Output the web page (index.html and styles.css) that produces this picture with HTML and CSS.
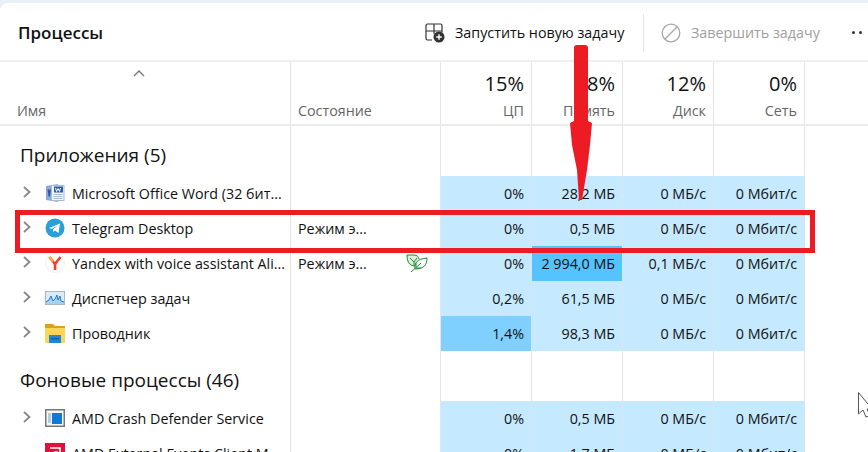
FILE: index.html
```html
<!DOCTYPE html>
<html lang="en">
<head>
    <meta charset="UTF-8">
    <meta name="viewport" content="width=device-width, initial-scale=1.0">
    <title>Процессы</title>
    <link rel="stylesheet" href="styles.css">
</head>
<body>
    <div class="panel">
        <!-- Toolbar -->
        <div class="toolbar">
            <div class="title">Процессы</div>
            <div class="action action-run">
                <svg width="20" height="20" viewBox="0 0 20 20" fill="none" stroke="#333" stroke-width="1.2">
                    <path d="M1 8V2.500A1.500 1.500 0 0 1 2.500 1H15.500A1.500 1.500 0 0 1 17 2.500V9.500M1 8H17M9 1V11M1 8V15.500A1.500 1.500 0 0 0 2.500 17H7"/>
                    <circle cx="14" cy="14" r="5.500" fill="#333" stroke="none"/>
                    <path d="M14 11.200V16.800M11.200 14H16.800" stroke="#fff" stroke-width="1.400"/>
                </svg>
                <span>Запустить новую задачу</span>
            </div>
            <div class="divider"></div>
            <div class="action action-off">
                <svg width="20" height="20" viewBox="0 0 20 20" fill="none" stroke="#a8a8a8" stroke-width="1.300">
                    <circle cx="10" cy="10" r="8.800"/>
                    <path d="M3.800 16.200L16.200 3.800"/>
                </svg>
                <span>Завершить задачу</span>
            </div>
            <div class="more"><i></i><i></i></div>
        </div>

        <!-- Column headers -->
        <div class="row head">
            <div class="cell name-head">
                <svg class="sort" width="12" height="7" viewBox="0 0 12 7" fill="none" stroke="#777" stroke-width="1.300"><path d="M1 6L6 1L11 6"/></svg>
                <span class="label">Имя</span>
            </div>
            <div class="cell state-head"><span class="label">Состояние</span></div>
            <div class="cell num-head"><span class="pct">15%</span><span class="label">ЦП</span></div>
            <div class="cell num-head"><span class="pct">18%</span><span class="label">Память</span></div>
            <div class="cell num-head"><span class="pct">12%</span><span class="label">Диск</span></div>
            <div class="cell num-head"><span class="pct">0%</span><span class="label">Сеть</span></div>
        </div>

        <!-- Apps -->
        <div class="row group">
            <div class="cell group-name">Приложения (5)</div>
            <div class="cell"></div><div class="cell"></div><div class="cell"></div><div class="cell"></div><div class="cell"></div>
        </div>

        <div class="row item">
            <div class="cell name">
                <svg class="arrow" width="8" height="12" viewBox="0 0 8 12" fill="none" stroke="#888" stroke-width="1.800"><path d="M1 1L6.500 6L1 11"/></svg>
                <svg class="icon" width="20" height="20" viewBox="0 0 20 20">
                    <path d="M1 3L13 1V19L1 17Z" fill="#8fa9d6"/>
                    <rect x="6.500" y="2.500" width="12.500" height="15" fill="#f4f6fa" stroke="#a9bad6"/>
                    <rect x="9" y="3.500" width="9" height="6" fill="#2b5aa8"/>
                    <path d="M10.500 5L11.500 8.500L13 5.500L14.500 8.500L15.500 5" fill="none" stroke="#fff"/>
                    <path d="M8.500 11.500H17.500M8.500 13.500H17.500M8.500 15.500H17.500" stroke="#a9bad6"/>
                    <path d="M2.500 6.500H6L5 13.500H3.500Z" fill="#2f5ea8"/>
                </svg>
                <span class="text">Microsoft Office Word (32 бит...</span>
            </div>
            <div class="cell state"></div>
            <div class="cell val load">0%</div>
            <div class="cell val load">28,2 МБ</div>
            <div class="cell val load">0 МБ/с</div>
            <div class="cell val load">0 Мбит/с</div>
        </div>

        <div class="row item">
            <div class="cell name">
                <svg class="arrow" width="8" height="12" viewBox="0 0 8 12" fill="none" stroke="#888" stroke-width="1.800"><path d="M1 1L6.500 6L1 11"/></svg>
                <svg class="icon" width="20" height="20" viewBox="0 0 20 20">
                    <circle cx="10" cy="10" r="9.500" fill="#2a9fd8"/>
                    <path d="M4 10L15 5.500L13.500 15L10 12.500L8.500 14L8 11.500L12.500 7.500L6.800 11Z" fill="#fff"/>
                </svg>
                <span class="text">Telegram Desktop</span>
            </div>
            <div class="cell state"><span class="text">Режим э...</span></div>
            <div class="cell val load">0%</div>
            <div class="cell val load">0,5 МБ</div>
            <div class="cell val load">0 МБ/с</div>
            <div class="cell val load">0 Мбит/с</div>
        </div>

        <div class="row item">
            <div class="cell name">
                <svg class="arrow" width="8" height="12" viewBox="0 0 8 12" fill="none" stroke="#888" stroke-width="1.800"><path d="M1 1L6.500 6L1 11"/></svg>
                <svg class="icon" width="20" height="20" viewBox="0 0 20 20">
                    <circle cx="10" cy="10" r="9.500" fill="#fff" stroke="#f2f2f2"/>
                    <path d="M4.500 4L10 11L15.500 4" fill="none" stroke="#f2402f" stroke-width="2.600"/>
                    <path d="M10 10V17" stroke="#f2402f" stroke-width="2.600"/>
                    <path d="M4.500 4L8 8.500" stroke="#f9b233" stroke-width="2.600"/>
                </svg>
                <span class="text">Yandex with voice assistant Ali...</span>
            </div>
            <div class="cell state">
                <span class="text">Режим э...</span>
                <svg class="leaf" width="22" height="19" viewBox="0 0 22 19" fill="none" stroke="#1f8a2e" stroke-width="1">
                    <path d="M9 12C3 12 1 7 1 1H8C11 1 13 3 13 5" fill="#dceedd"/>
                    <path d="M9 15C8 9 11 5 21 4C21 11 18 15 9 15Z" fill="#fff"/>
                    <path d="M5 18L15 9M10 13V9M10 14H15M4 4L8 8L11 4M8 8V12"/>
                </svg>
            </div>
            <div class="cell val load">0%</div>
            <div class="cell val load-high">2 994,0 МБ</div>
            <div class="cell val load">0,1 МБ/с</div>
            <div class="cell val load">0 Мбит/с</div>
        </div>

        <div class="row item">
            <div class="cell name">
                <svg class="arrow" width="8" height="12" viewBox="0 0 8 12" fill="none" stroke="#888" stroke-width="1.800"><path d="M1 1L6.500 6L1 11"/></svg>
                <svg class="icon" width="20" height="20" viewBox="0 0 20 20">
                    <rect x="0.500" y="3.500" width="19" height="13" fill="#dcebf7" stroke="#a9b8c6"/>
                    <path d="M1 14L4 12L6 8L8 13L10 11L12 7L13 12L15 8L16 13L19 14V16H1Z" fill="#a5d2f2"/>
                    <path d="M1 14L4 12L6 8L8 13L10 11L12 7L13 12L15 8L16 13L19 14" fill="none" stroke="#2377c9"/>
                </svg>
                <span class="text">Диспетчер задач</span>
            </div>
            <div class="cell state"></div>
            <div class="cell val load">0,2%</div>
            <div class="cell val load">61,5 МБ</div>
            <div class="cell val load">0 МБ/с</div>
            <div class="cell val load">0 Мбит/с</div>
        </div>

        <div class="row item">
            <div class="cell name">
                <svg class="arrow" width="8" height="12" viewBox="0 0 8 12" fill="none" stroke="#888" stroke-width="1.800"><path d="M1 1L6.500 6L1 11"/></svg>
                <svg class="icon" width="20" height="20" viewBox="0 0 20 20">
                    <path d="M0 1H8L10 3H20V6H0Z" fill="#d9a21b"/>
                    <rect x="0" y="5" width="20" height="15" fill="#fcd55b"/>
                    <rect x="4" y="12" width="12" height="8" fill="#1e88d8"/>
                    <rect x="6" y="15" width="8" height="1.500" fill="#0f5ea8"/>
                </svg>
                <span class="text">Проводник</span>
            </div>
            <div class="cell state"></div>
            <div class="cell val load-mid">1,4%</div>
            <div class="cell val load">98,3 МБ</div>
            <div class="cell val load">0 МБ/с</div>
            <div class="cell val load">0 Мбит/с</div>
        </div>

        <!-- Background processes -->
        <div class="row group">
            <div class="cell group-name">Фоновые процессы (46)</div>
            <div class="cell"></div><div class="cell"></div><div class="cell"></div><div class="cell"></div><div class="cell"></div>
        </div>

        <div class="row item">
            <div class="cell name">
                <svg class="arrow" width="8" height="12" viewBox="0 0 8 12" fill="none" stroke="#888" stroke-width="1.800"><path d="M1 1L6.500 6L1 11"/></svg>
                <svg class="icon" width="20" height="20" viewBox="0 0 20 20">
                    <rect x="0.750" y="1.750" width="18.500" height="16.500" fill="#f7f7f7" stroke="#777" stroke-width="1.500"/>
                    <rect x="7" y="5" width="10" height="11" fill="#0f7bd7"/>
                    <path d="M3 6H6M3 8H6M3 10H6M3 12H6M3 14H6" stroke="#6aa7dc"/>
                </svg>
                <span class="text">AMD Crash Defender Service</span>
            </div>
            <div class="cell state"></div>
            <div class="cell val load">0%</div>
            <div class="cell val load">0,5 МБ</div>
            <div class="cell val load">0 МБ/с</div>
            <div class="cell val load">0 Мбит/с</div>
        </div>

        <div class="row item">
            <div class="cell name">
                <svg class="icon icon-last" width="20" height="20" viewBox="0 0 20 20">
                    <rect width="20" height="20" fill="#e0103a"/>
                    <path d="M5 5H15V15M9 9H12V12" fill="none" stroke="#fff" stroke-width="1.600"/>
                </svg>
                <span class="text">AMD External Events Client M</span>
            </div>
            <div class="cell state"></div>
            <div class="cell val load">0%</div>
            <div class="cell val load">1,7 МБ</div>
            <div class="cell val load">0 МБ/с</div>
            <div class="cell val load">0 Мбит/с</div>
        </div>
    </div>

    <!-- Annotations drawn over the screenshot -->
    <div class="mark-box"></div>
    <svg class="mark-arrow" width="24" height="158" viewBox="0 0 24 158">
        <path d="M4 3Q4 0 7 0H15Q18 0 18 3V76L22 78L20 100L17 125L12 155L9 155L7 125L2 100L0 78L4 76Z" fill="#ed1c24"/>
    </svg>
    <svg class="cursor" width="12" height="26" viewBox="0 0 12 26" fill="#fff" stroke="#555" stroke-width="1"><path d="M0.500 0.500V22L5 18L8 25L12 23.500L9 17H14Z"/></svg>
</body>
</html>
```

FILE: styles.css
```css
html, body {
    margin: 0;
    height: 100%;
    overflow: hidden;
}
body {
    background-color: #e9eff7;
    color: #111;
    font-family: "Open Sans", "Noto Sans", sans-serif;
    font-size: 14.3px;
    padding-top: 3px;
    box-sizing: border-box;
}
.panel {
    background-color: #fff;
    border-top-left-radius: 8px;
    height: 100%;
}
.toolbar {
    display: flex;
    align-items: center;
    height: 59px;
    box-sizing: border-box;
    padding: 2px 0 0 18px;
    border-bottom: 2px solid #f0f0f0;
}
.title {
    font-size: 17px;
    font-weight: 600;
    margin-right: auto;
}
.action {
    display: flex;
    align-items: center;
    gap: 10px;
    white-space: nowrap;
}
.action-run {
    width: 218px;
}
.action-off {
    color: #a0a0a0;
    width: 174px;
    margin-left: 17px;
}
.divider {
    width: 1px;
    height: 38px;
    background-color: #e6e6e6;
}
.more {
    display: flex;
    gap: 4px;
    width: 16px;
    margin-left: 17px;
}
.more i {
    width: 3px;
    height: 3px;
    border-radius: 50%;
    background-color: #333;
}
.row {
    display: grid;
    grid-template-columns: 291px 150px 91px 91px 91px 91px;
}
.cell {
    box-sizing: border-box;
    border-right: 1px solid #e5e5e5;
    min-width: 0;
}
.head {
    height: 64px;
    border-bottom: 2px solid #ececec;
    box-sizing: border-box;
}
.name-head, .state-head {
    display: flex;
    flex-direction: column;
    justify-content: flex-end;
    padding-bottom: 3px;
}
.name-head {
    padding-left: 17px;
    position: relative;
}
.state-head {
    padding-left: 7px;
}
.sort {
    position: absolute;
    left: 133px;
    top: 8px;
}
.num-head {
    display: flex;
    flex-direction: column;
    align-items: flex-end;
    justify-content: flex-end;
    padding: 0 7px 3px 0;
}
.pct {
    font-size: 20px;
    line-height: 24px;
    margin-bottom: 5px;
}
.label {
    color: #666;
    line-height: 20px;
}
.group {
    height: 50px;
}
.group-name {
    font-size: 19px;
    padding: 16px 0 0 20px;
    white-space: nowrap;
}
.item {
    height: 35px;
}
.name, .state {
    display: flex;
    align-items: center;
    white-space: nowrap;
    overflow: hidden;
}
.name {
    padding-left: 23px;
}
.arrow {
    flex: none;
    margin: -3px 14px 0 0;
}
.icon {
    flex: none;
    margin: -2px 7px 0 0;
}
.icon-last {
    margin-left: 22px;
}
.state {
    padding: 0 12px 0 7px;
    justify-content: space-between;
}
.val {
    display: flex;
    align-items: center;
    justify-content: flex-end;
    padding-right: 7px;
    white-space: nowrap;
    border-right-color: #d6e6f0;
}
.load {
    background-color: #c5e9fe;
}
.load-mid {
    background-color: #80d0ff;
}
.load-high {
    background-color: #56c3ff;
}
.mark-box {
    position: absolute;
    left: 15px;
    top: 210px;
    width: 800px;
    height: 43px;
    box-sizing: border-box;
    border: 5px solid #ed1c24;
}
.mark-arrow {
    position: absolute;
    left: 570px;
    top: 45px;
}
.cursor {
    position: absolute;
    left: 858px;
    top: 392px;
}
```
